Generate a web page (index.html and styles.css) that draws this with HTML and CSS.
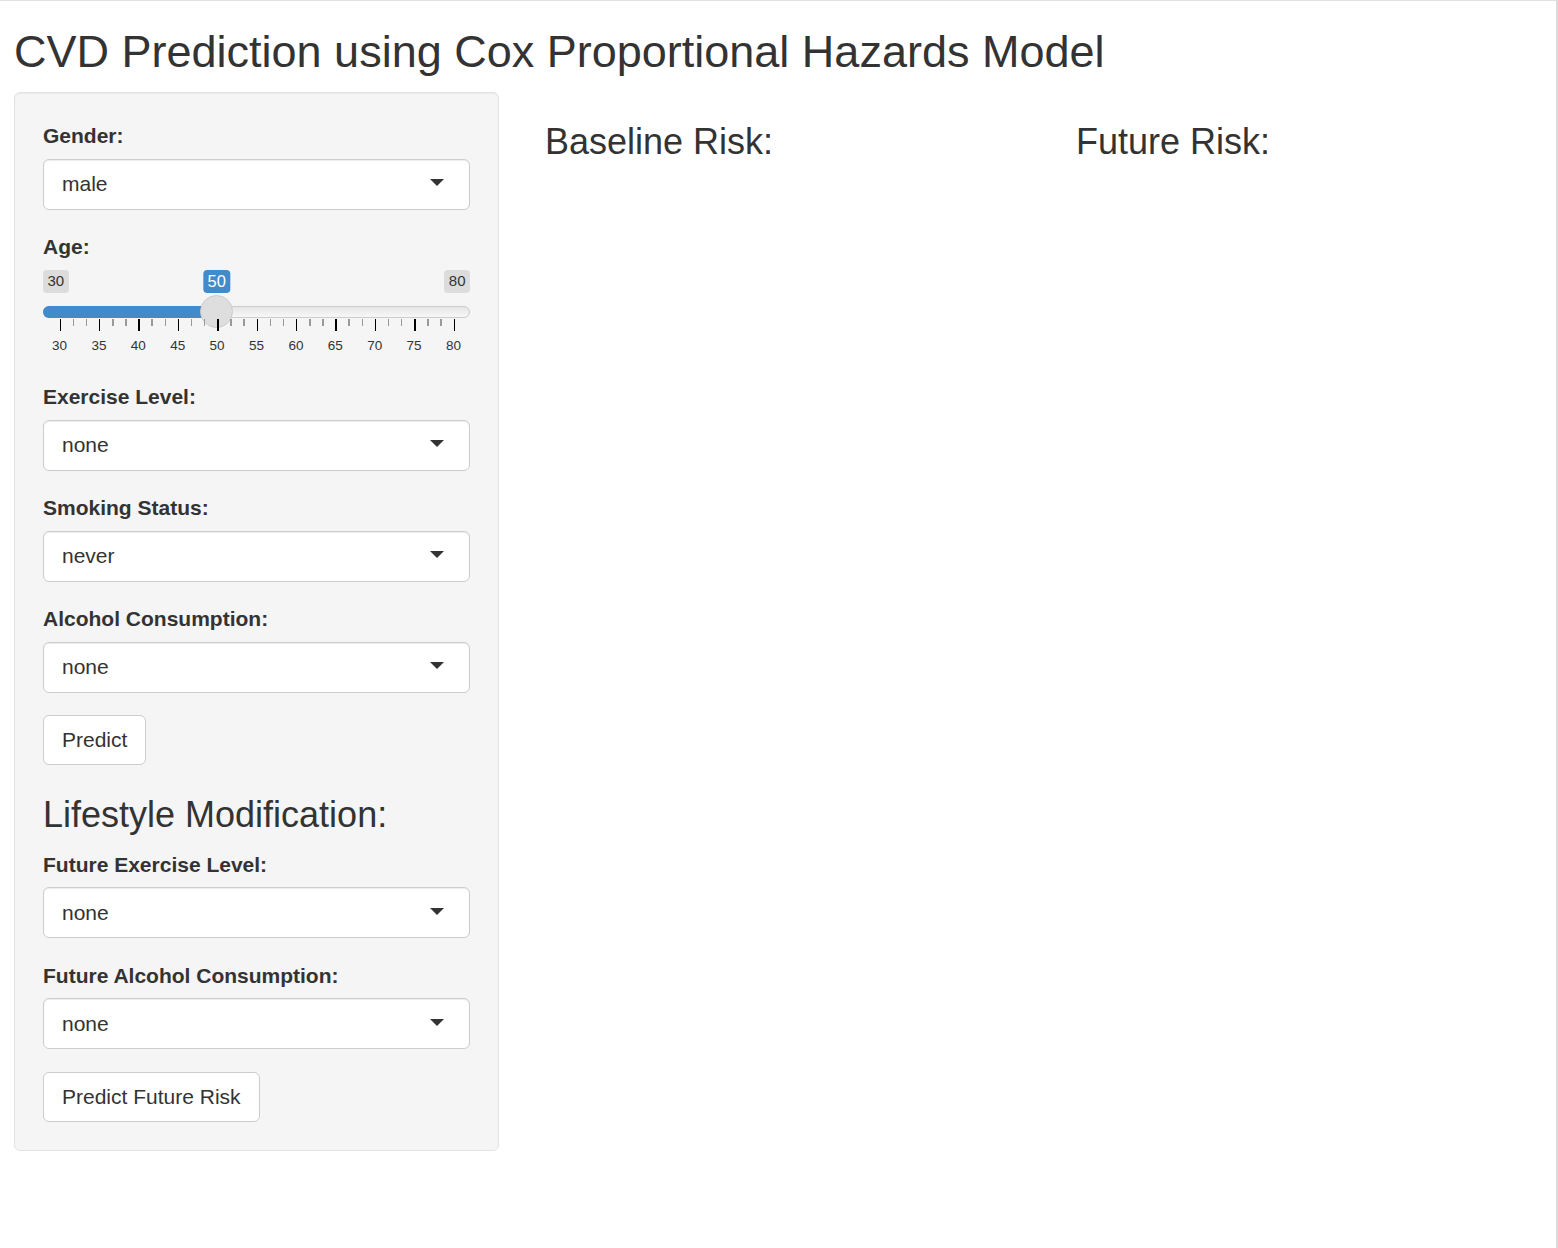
FILE: index.html
```html
<!DOCTYPE html>
<html lang="en">
<head>
<meta charset="utf-8">
<title>CVD Prediction</title>
<link rel="stylesheet" href="styles.css">
</head>
<body>
<div class="frame">
  <h2 class="title">CVD Prediction using Cox Proportional Hazards Model</h2>
  <div class="layout">
    <div class="sidebar">
      <div class="group">
        <label class="label">Gender:</label>
        <div class="select"><span>male</span><span class="caret"></span></div>
      </div>
      <div class="group">
        <label class="label">Age:</label>
        <div class="slider">
          <span class="irs-min">30</span>
          <span class="irs-max">80</span>
          <div class="track"></div>
          <div class="fill" style="width:173.7px"></div>
          <span class="irs-single" style="left:173.7px">50</span>
          <div class="handle" style="left:157.2px"></div>
          <div class="grid">
            <span class="pol" style="left:0%"></span>
            <span class="pol small" style="left:3.333%"></span>
            <span class="pol small" style="left:6.667%"></span>
            <span class="pol" style="left:10%"></span>
            <span class="pol small" style="left:13.333%"></span>
            <span class="pol small" style="left:16.667%"></span>
            <span class="pol" style="left:20%"></span>
            <span class="pol small" style="left:23.333%"></span>
            <span class="pol small" style="left:26.667%"></span>
            <span class="pol" style="left:30%"></span>
            <span class="pol small" style="left:33.333%"></span>
            <span class="pol small" style="left:36.667%"></span>
            <span class="pol" style="left:40%"></span>
            <span class="pol small" style="left:43.333%"></span>
            <span class="pol small" style="left:46.667%"></span>
            <span class="pol" style="left:50%"></span>
            <span class="pol small" style="left:53.333%"></span>
            <span class="pol small" style="left:56.667%"></span>
            <span class="pol" style="left:60%"></span>
            <span class="pol small" style="left:63.333%"></span>
            <span class="pol small" style="left:66.667%"></span>
            <span class="pol" style="left:70%"></span>
            <span class="pol small" style="left:73.333%"></span>
            <span class="pol small" style="left:76.667%"></span>
            <span class="pol" style="left:80%"></span>
            <span class="pol small" style="left:83.333%"></span>
            <span class="pol small" style="left:86.667%"></span>
            <span class="pol" style="left:90%"></span>
            <span class="pol small" style="left:93.333%"></span>
            <span class="pol small" style="left:96.667%"></span>
            <span class="pol" style="left:100%"></span>
            <span class="num" style="left:0%">30</span>
            <span class="num" style="left:10%">35</span>
            <span class="num" style="left:20%">40</span>
            <span class="num" style="left:30%">45</span>
            <span class="num" style="left:40%">50</span>
            <span class="num" style="left:50%">55</span>
            <span class="num" style="left:60%">60</span>
            <span class="num" style="left:70%">65</span>
            <span class="num" style="left:80%">70</span>
            <span class="num" style="left:90%">75</span>
            <span class="num" style="left:100%">80</span>
          </div>
        </div>
      </div>
      <div class="group">
        <label class="label">Exercise Level:</label>
        <div class="select"><span>none</span><span class="caret"></span></div>
      </div>
      <div class="group">
        <label class="label">Smoking Status:</label>
        <div class="select"><span>never</span><span class="caret"></span></div>
      </div>
      <div class="group">
        <label class="label">Alcohol Consumption:</label>
        <div class="select"><span>none</span><span class="caret"></span></div>
      </div>
      <button class="btn" type="button">Predict</button>
      <h3 class="subhead">Lifestyle Modification:</h3>
      <div class="group">
        <label class="label">Future Exercise Level:</label>
        <div class="select"><span>none</span><span class="caret"></span></div>
      </div>
      <div class="group">
        <label class="label">Future Alcohol Consumption:</label>
        <div class="select"><span>none</span><span class="caret"></span></div>
      </div>
      <button class="btn" type="button">Predict Future Risk</button>
    </div>
    <div class="main">
      <div class="col"><h3 class="subhead">Baseline Risk:</h3></div>
      <div class="col"><h3 class="subhead">Future Risk:</h3></div>
    </div>
  </div>
</div>
</body>
</html>
```
FILE: styles.css
```css
html, body {
  margin: 0;
  padding: 0;
}
body {
  font-family: "Liberation Sans", Arial, sans-serif;
  font-size: 21px;
  line-height: 30px;
  color: #333;
  background: #fff;
}
.frame {
  min-height: 1248px;
  box-sizing: border-box;
  border-top: 1px solid #dfe1e5;
  border-right: 2px solid #dcdcdc;
  padding: 0 14px;
}
.title {
  font-size: 45px;
  font-weight: normal;
  line-height: 49.5px;
  margin: 26px 0 15px;
}
.layout {
  display: flex;
  align-items: flex-start;
}
.sidebar {
  width: 485px;
  flex: none;
  box-sizing: border-box;
  background: #f5f5f5;
  border: 1px solid #e3e3e3;
  border-radius: 6px;
  padding: 28.5px 28px;
  box-shadow: inset 0 1px 1px rgba(0, 0, 0, 0.05);
}
.group {
  margin-bottom: 22.5px;
}
.label {
  display: block;
  font-weight: bold;
  margin-bottom: 7.5px;
}
.select {
  height: 51px;
  box-sizing: border-box;
  border: 1px solid #ccc;
  border-radius: 6px;
  background: #fff;
  padding: 0 18px;
  display: flex;
  align-items: center;
  justify-content: space-between;
  box-shadow: inset 0 1px 1px rgba(0, 0, 0, 0.075);
}
.caret {
  width: 0;
  height: 0;
  border-left: 7.5px solid transparent;
  border-right: 7.5px solid transparent;
  border-top: 7.5px solid #333;
  margin-right: 7px;
  margin-bottom: 3px;
}
.btn {
  display: inline-block;
  height: 50px;
  box-sizing: border-box;
  padding: 9px 18px;
  border: 1px solid #ccc;
  border-radius: 6px;
  background: #fff;
  color: #333;
  font-family: inherit;
  font-size: 21px;
  line-height: 30px;
  vertical-align: top;
}
.subhead {
  font-size: 36px;
  font-weight: normal;
  line-height: 39.6px;
  margin: 30px 0 15px;
}
.main {
  display: flex;
  margin-left: 46px;
}
.col {
  width: 531px;
}

/* slider */
.slider {
  position: relative;
  height: 90px;
}
.irs-min, .irs-max, .irs-single {
  position: absolute;
  top: 0;
  padding: 1.5px 4.5px;
  line-height: 20px;
  border-radius: 4px;
}
.irs-min, .irs-max {
  font-size: 15px;
  background: rgba(0, 0, 0, 0.1);
  color: #333;
}
.irs-min { left: 0; }
.irs-max { right: 0; }
.irs-single {
  font-size: 16.5px;
  background: #428bca;
  color: #fff;
  transform: translateX(-50%);
}
.track {
  position: absolute;
  left: 0;
  right: 0;
  top: 36.5px;
  height: 12px;
  box-sizing: border-box;
  border: 1px solid #ccc;
  border-radius: 6px;
  background: linear-gradient(to bottom, #dedede -50%, #fff 150%);
}
.fill {
  position: absolute;
  left: 0;
  top: 36.5px;
  height: 12px;
  background: #428bca;
  border-radius: 6px 0 0 6px;
}
.handle {
  position: absolute;
  top: 25px;
  width: 33px;
  height: 33px;
  box-sizing: border-box;
  border-radius: 50%;
  background: #dedede;
  border: 1px solid #ccc;
}
.grid {
  position: absolute;
  left: 16.5px;
  right: 16.5px;
  top: 49px;
  height: 40px;
}
.pol {
  position: absolute;
  top: 0;
  width: 1.5px;
  height: 12px;
  background: #000;
}
.pol.small {
  height: 7px;
  background: #999;
}
.num {
  position: absolute;
  top: 19px;
  font-size: 13.5px;
  line-height: 15px;
  transform: translateX(-50%);
  color: #333;
}
```
